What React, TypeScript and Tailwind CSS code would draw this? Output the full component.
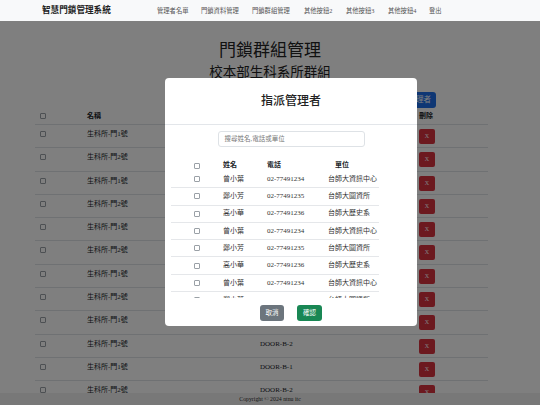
import React from "react";

const FONT = { fontFamily: '"Liberation Serif", "Noto Sans CJK TC", serif' };

function Box() {
  return <span className="block w-[6px] h-[6px] rounded-[1px] border border-[#9aa0a6] bg-white" />;
}

const doors = Array.from({ length: 12 }, (_, i) => ({
  name: i % 2 === 0 ? "生科所-門1號" : "生科所-門2號",
  code: i % 2 === 0 ? "DOOR-B-1" : "DOOR-B-2",
}));

const people = [
  ["曾小葉", "02-77491234", "台師大資訊中心"],
  ["鄭小芳", "02-77491235", "台師大圖資所"],
  ["高小華", "02-77491236", "台師大歷史系"],
];
const peopleRows = Array.from({ length: 9 }, (_, i) => people[i % 3]);

export default function App() {
  return (
    <div className="relative w-[540px] h-[405px] overflow-hidden bg-white text-[#212529]" style={FONT}>
      {/* Navbar */}
      <nav className="relative z-30 h-[21px] bg-[#f8f9fa] flex items-center">
        <div className="ml-[42px] w-[115px] text-[8.6px] font-bold text-[#222]">智慧門鎖管理系統</div>
        <div className="flex items-center text-[6.3px] text-[#555]">
          <span className="w-[44px]">管理者名單</span>
          <span className="w-[51px]">門鎖資料管理</span>
          <span className="w-[52px]">門鎖群組管理</span>
          <span className="w-[42px]">其他按鈕2</span>
          <span className="w-[42px]">其他按鈕3</span>
          <span className="w-[41px]">其他按鈕4</span>
          <span>登出</span>
        </div>
      </nav>

      {/* Page content */}
      <main className="flex flex-col items-center">
        <h1 className="mt-[20px] text-[17px] leading-[20px] text-[#222]">門鎖群組管理</h1>
        <h2 className="mt-[4px] text-[13.5px] leading-[16px] text-[#222]">校本部生科系所群組</h2>
        <div className="self-start ml-[35px] w-[453px]">
          <div className="mt-[11px] flex justify-end pr-[52px]">
            <button className="h-[16px] px-[5px] rounded-[3px] bg-[#1f6fe8] text-white text-[7.5px]">指派管理者</button>
          </div>
          <div className="text-[7px]">
            <div className="grid grid-cols-[52px_173px_159px_69px] h-[17px] items-center border-b border-[#dee2e6] font-bold">
              <div className="pl-[5px]"><Box /></div>
              <div>名稱</div>
              <div>代碼</div>
              <div>刪除</div>
            </div>
            {doors.map((d, i) => (
              <div key={i} className="grid grid-cols-[52px_173px_159px_69px] h-[23.3px] border-b border-[#dee2e6]">
                <div className="pl-[5px] pt-[6px]"><Box /></div>
                <div className="pt-[4px] leading-[10px]">{d.name}</div>
                <div className="pt-[4px] leading-[10px]">{d.code}</div>
                <div className="pt-[4px]">
                  <button className="w-[16px] h-[15px] rounded-[2px] bg-[#d8333f] text-white text-[6px] leading-[15px]">X</button>
                </div>
              </div>
            ))}
          </div>
        </div>
      </main>

      {/* Page footer */}
      <footer className="absolute left-0 right-0 bottom-0 h-[12px] bg-[#f0f0f0] flex items-center justify-center text-[5.8px] text-[#333]">
        Copyright © 2024 ntnu itc
      </footer>

      {/* Backdrop */}
      <div className="absolute left-0 right-0 top-[21px] bottom-0 z-10 bg-black/50" />

      {/* Modal */}
      <div className="absolute z-20 left-[165px] top-[78px] w-[252px] h-[248px] bg-white rounded-[4px] flex flex-col">
        <div className="h-[47px] border-b border-[#e3e6ea] flex items-center justify-center">
          <span className="text-[12px] font-medium text-[#222]">指派管理者</span>
        </div>
        <div className="pt-[6px] flex justify-center">
          <div className="w-[147px] h-[16px] border border-[#dee2e6] rounded-[3px] flex items-center pl-[6px] text-[6.5px] text-[#777]">
            搜尋姓名,電話或單位
          </div>
        </div>
        <div className="ml-[6px] mt-[13px] w-[208px] h-[138px] overflow-hidden text-[7px]">
          <div className="grid grid-cols-[52px_44px_61px_51px] h-[11px] items-center font-bold">
            <div className="flex justify-center"><Box /></div>
            <div>姓名</div>
            <div>電話</div>
            <div className="pl-[7px]">單位</div>
          </div>
          {peopleRows.map((p, i) => (
            <div key={i} className="grid grid-cols-[52px_44px_61px_51px] h-[17.3px] items-center border-b border-[#e5e7ea] text-[#333]">
              <div className="flex justify-center"><Box /></div>
              <div>{p[0]}</div>
              <div>{p[1]}</div>
              <div className="whitespace-nowrap">{p[2]}</div>
            </div>
          ))}
        </div>
        <div className="mt-[7px] flex justify-center gap-[13px]">
          <button className="w-[24px] h-[16px] rounded-[3px] bg-[#6c757d] text-white text-[6.5px]">取消</button>
          <button className="w-[25px] h-[16px] rounded-[3px] bg-[#198754] text-white text-[6.5px]">確認</button>
        </div>
      </div>
    </div>
  );
}
